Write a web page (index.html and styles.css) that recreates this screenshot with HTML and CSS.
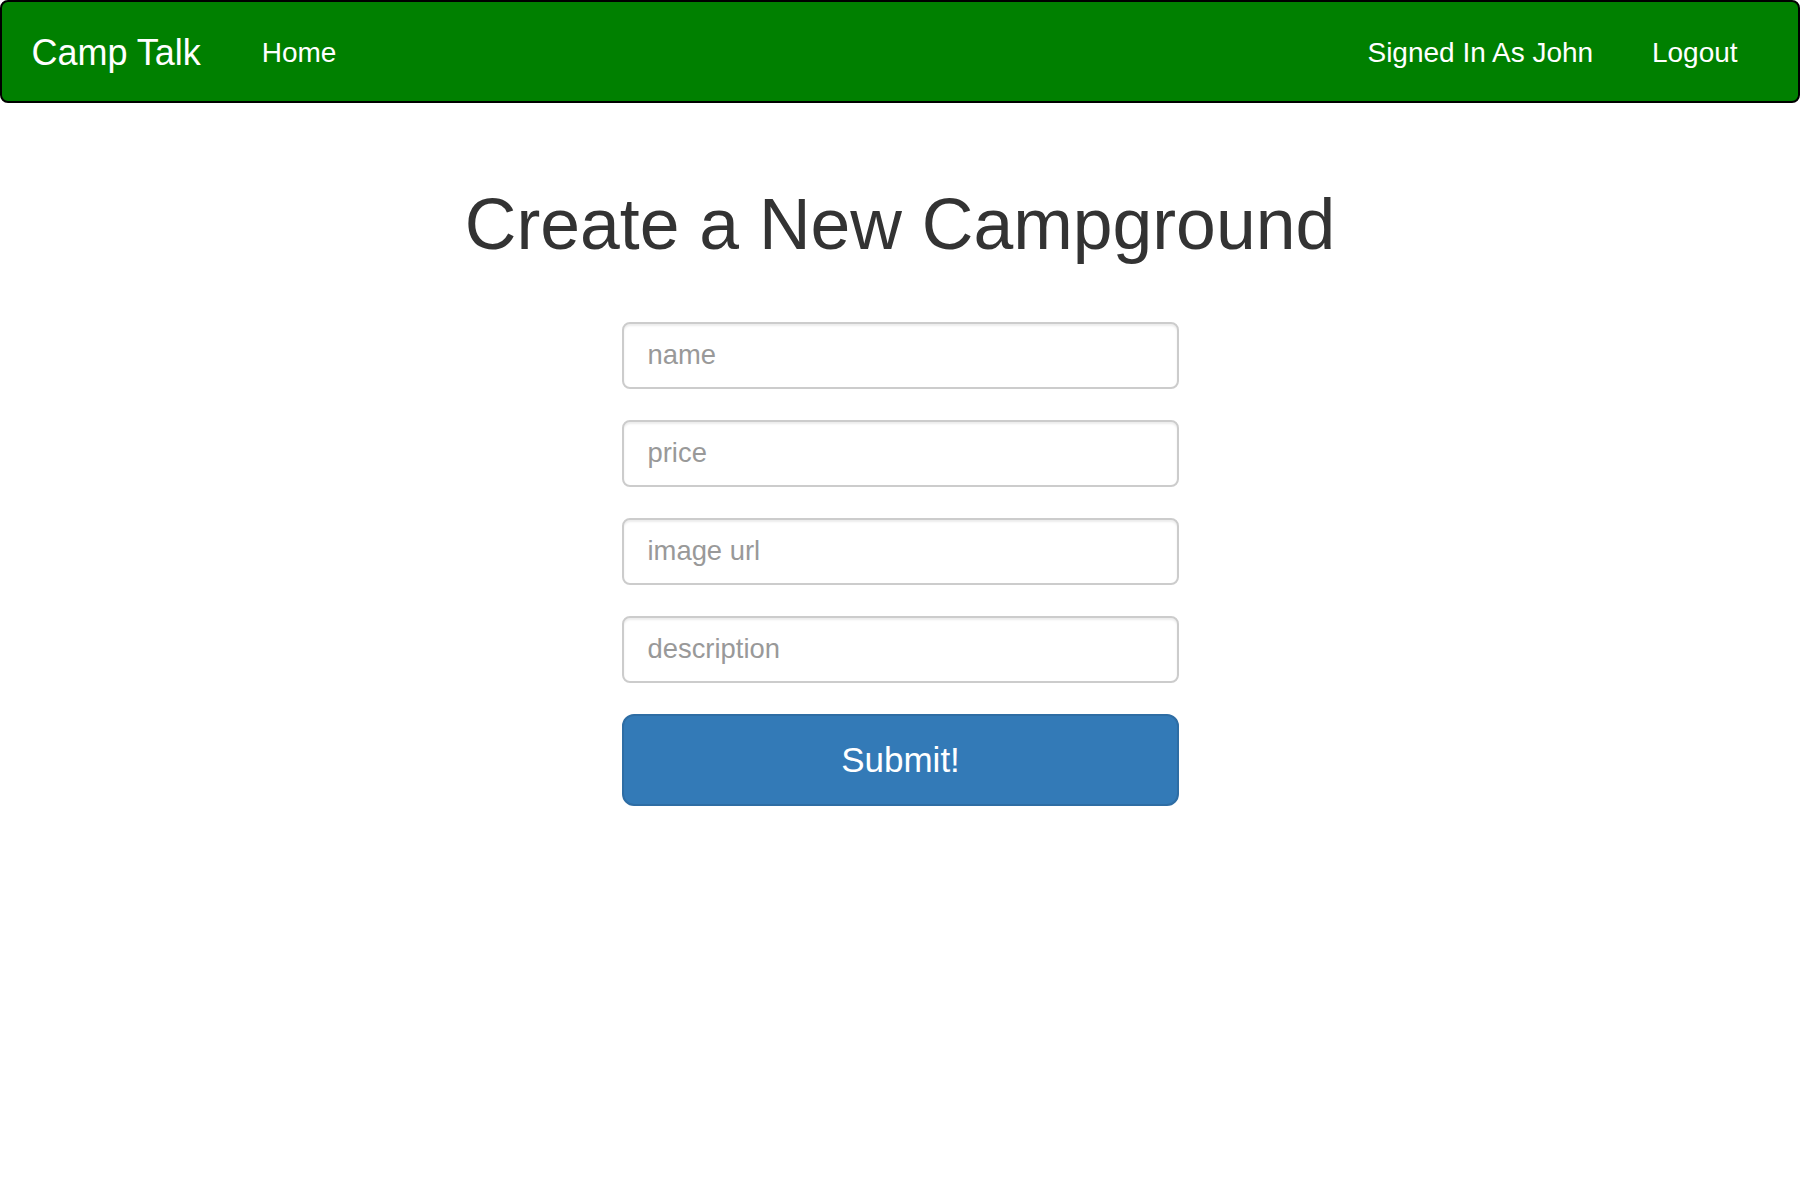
FILE: index.html
```html
<!DOCTYPE html>
<html lang="en">
<head>
<meta charset="utf-8">
<title>Camp Talk</title>
<link rel="stylesheet" href="styles.css">
</head>
<body>
<nav class="navbar">
  <div class="nav-left">
    <a class="brand" href="#">Camp Talk</a>
    <ul class="nav-list">
      <li><a class="nav-link" href="#">Home</a></li>
    </ul>
  </div>
  <ul class="nav-list nav-right">
    <li><a class="nav-link" href="#">Signed In As John</a></li>
    <li><a class="nav-link" href="#">Logout</a></li>
  </ul>
</nav>
<main class="content">
  <h1 class="title">Create a New Campground</h1>
  <form class="camp-form">
    <div class="form-group"><input class="form-control" type="text" name="name" placeholder="name"></div>
    <div class="form-group"><input class="form-control" type="text" name="price" placeholder="price"></div>
    <div class="form-group"><input class="form-control" type="text" name="image" placeholder="image url"></div>
    <div class="form-group form-group-last"><input class="form-control" type="text" name="description" placeholder="description"></div>
    <div class="form-group"><button class="btn-submit" type="button">Submit!</button></div>
  </form>
</main>
</body>
</html>
```

FILE: styles.css
```css
html, body {
  margin: 0;
  padding: 0;
  background: #fff;
}
body {
  font-family: "Liberation Sans", Arial, Helvetica, sans-serif;
  color: #333;
}
a { text-decoration: none; }

.navbar {
  display: flex;
  justify-content: space-between;
  align-items: stretch;
  min-height: 99px;
  background: #008000;
  border: 2px solid #000;
  border-radius: 8px;
  margin-bottom: 39px;
}
.nav-left {
  display: flex;
}
.brand {
  display: block;
  padding: 30.5px 31.5px 29.5px 29.4px;
  font-size: 36px;
  line-height: 39px;
  height: 39px;
  color: #fff;
}
.nav-list {
  display: flex;
  list-style: none;
  margin: 0;
  padding: 0;
}
.nav-right {
  margin-right: 31px;
}
.nav-link {
  display: block;
  padding: 30.5px 29.4px 29.5px;
  font-size: 28px;
  line-height: 39.2px;
  color: #fff;
}

.content {
  display: flex;
  flex-direction: column;
  align-items: center;
}
.title {
  margin: 43px 0 58px;
  font-size: 71.5px;
  line-height: 1.1;
  font-weight: 500;
  color: #333;
  text-align: center;
}
.camp-form {
  width: 557px;
  margin-left: 1px;
}
.form-group {
  margin-bottom: 31px;
}
.form-group-last {
  margin-bottom: 31px;
}
.form-control {
  display: block;
  box-sizing: border-box;
  width: 100%;
  height: 67px;
  padding: 0 23.5px;
  font-family: "Liberation Sans", Arial, Helvetica, sans-serif;
  font-size: 27.4px;
  color: #555;
  background: #fff;
  border: 2px solid #ccc;
  border-radius: 8px;
  box-shadow: inset 0 2px 2px rgba(0,0,0,.075);
  outline: none;
}
.form-control::placeholder {
  color: #999;
}
.btn-submit {
  display: block;
  box-sizing: border-box;
  width: 100%;
  height: 92px;
  font-family: "Liberation Sans", Arial, Helvetica, sans-serif;
  font-size: 35px;
  color: #fff;
  background: #337ab7;
  border: 2px solid #2e6da4;
  border-radius: 12px;
  cursor: pointer;
}
```
